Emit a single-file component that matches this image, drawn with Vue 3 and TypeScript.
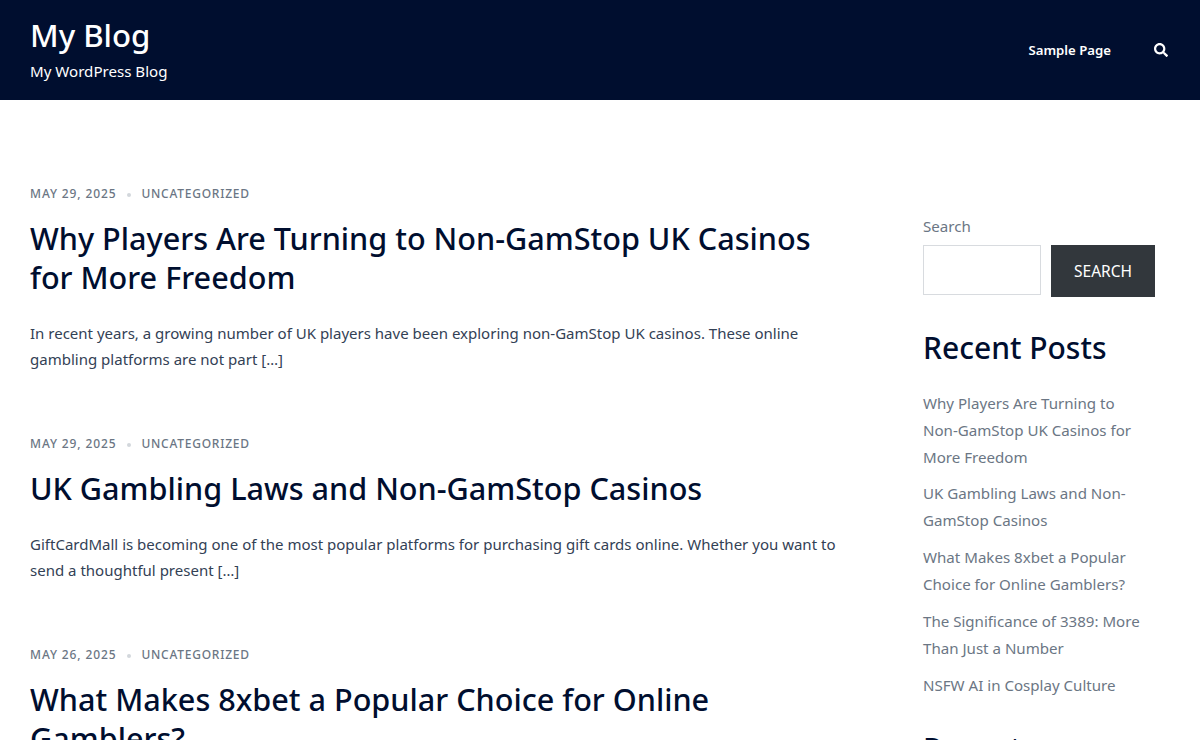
<script setup lang="ts">
const posts = [
  { date: 'MAY 29, 2025', title: 'Why Players Are Turning to Non-GamStop UK Casinos for More Freedom', text: 'In recent years, a growing number of UK players have been exploring non-GamStop UK casinos. These online gambling platforms are not part […]' },
  { date: 'MAY 29, 2025', title: 'UK Gambling Laws and Non-GamStop Casinos', text: 'GiftCardMall is becoming one of the most popular platforms for purchasing gift cards online. Whether you want to send a thoughtful present […]' },
  { date: 'MAY 26, 2025', title: 'What Makes 8xbet a Popular Choice for Online Gamblers?', text: '' },
]
const recent = [
  'Why Players Are Turning to Non-GamStop UK Casinos for More Freedom',
  'UK Gambling Laws and Non-GamStop Casinos',
  'What Makes 8xbet a Popular Choice for Online Gamblers?',
  'The Significance of 3389: More Than Just a Number',
  'NSFW AI in Cosplay Culture',
]
</script>

<template>
  <div class="page">
    <header class="header">
      <div>
        <div class="site-title">My Blog</div>
        <div class="tagline">My WordPress Blog</div>
      </div>
      <nav class="nav">
        <a class="nav-link">Sample Page</a>
        <svg class="search-icon" viewBox="0 0 512 512" width="14" height="14"><path fill="#fff" d="M505 442.700L405.300 343c-4.500-4.500-10.600-7-17-7H372c27.600-35.300 44-79.700 44-128C416 93.100 322.900 0 208 0S0 93.100 0 208s93.100 208 208 208c48.300 0 92.700-16.400 128-44v16.300c0 6.400 2.500 12.500 7 17l99.700 99.700c9.400 9.400 24.600 9.400 33.900 0l28.300-28.300c9.400-9.400 9.400-24.600.1-34zM208 336c-70.700 0-128-57.200-128-128 0-70.700 57.200-128 128-128 70.700 0 128 57.200 128 128 0 70.700-57.200 128-128 128z"/></svg>
      </nav>
    </header>
    <div class="layout">
      <main class="main">
        <article v-for="p in posts" :key="p.title" class="post">
          <div class="meta"><span class="date">{{ p.date }}</span><i class="dot"></i><span>UNCATEGORIZED</span></div>
          <h2 class="title">{{ p.title }}</h2>
          <p v-if="p.text" class="excerpt">{{ p.text }}</p>
        </article>
      </main>
      <aside class="side">
        <label class="search-label">Search</label>
        <div class="search-row">
          <input class="search-input" type="text" />
          <button class="search-btn">SEARCH</button>
        </div>
        <h2 class="widget-title">Recent Posts</h2>
        <ul class="recent">
          <li v-for="r in recent" :key="r">{{ r }}</li>
        </ul>
        <h2 class="widget-title next">Recent Comments</h2>
      </aside>
    </div>
  </div>
</template>

<style>
html, body { margin: 0; height: 740px; overflow: hidden; background: #fff; }
</style>

<style scoped>
.page { font-family: "Noto Sans", sans-serif; height: 740px; overflow: hidden; color: #1e2b3c; }
.header { height: 100px; background: #000e2f; color: #fff; display: flex; justify-content: space-between; align-items: center; padding: 0 32px 0 30px; box-sizing: border-box; }
.site-title { font-size: 31.2px; line-height: 40px; font-weight: 500; margin-top: -3px; }
.tagline { font-size: 15.1px; line-height: 24px; margin-top: 4px; }
.nav { display: flex; align-items: center; gap: 43px; }
.nav-link { font-size: 13.2px; font-weight: 600; }
.layout { display: flex; padding: 82px 0 0 30px; }
.main { width: 815px; margin-right: 78px; flex: none; }
.post { margin-bottom: 59.500px; }
.meta { display: flex; align-items: center; font-size: 12px; line-height: 24px; font-weight: 500; letter-spacing: .75px; color: #6b7684; }
.date { letter-spacing: .88px; }
.dot { width: 4px; height: 4px; border-radius: 50%; background: #d3d7dc; margin: 2px 10px 0 11px; }
.title { margin: 13px 0 22.500px; font-size: 30.600px; line-height: 39px; font-weight: 500; color: #000e2f; }
.excerpt { margin: 0; font-size: 15.020px; line-height: 26.600px; color: #334155; }
.side { width: 232px; padding-top: 32px; color: #6b7684; font-size: 15.100px; }
.search-label { display: block; line-height: 24px; margin-bottom: 7px; }
.search-row { display: flex; gap: 10px; }
.search-input { width: 118px; height: 50px; box-sizing: border-box; border: 1px solid #d8dbdf; background: #fff; }
.search-btn { width: 104px; height: 52px; border: 0; background: #32373c; color: #fff; font: 15.500px "Noto Sans", sans-serif; }
.widget-title { margin: 31px 0 21.700px; font-size: 30px; line-height: 40px; font-weight: 500; color: #000e2f; }
.widget-title.next { margin-top: 30px; }
.recent { list-style: none; margin: 0; padding: 0 8px 0 0; line-height: 27px; }
.recent li { margin-bottom: 9.750px; }
</style>
